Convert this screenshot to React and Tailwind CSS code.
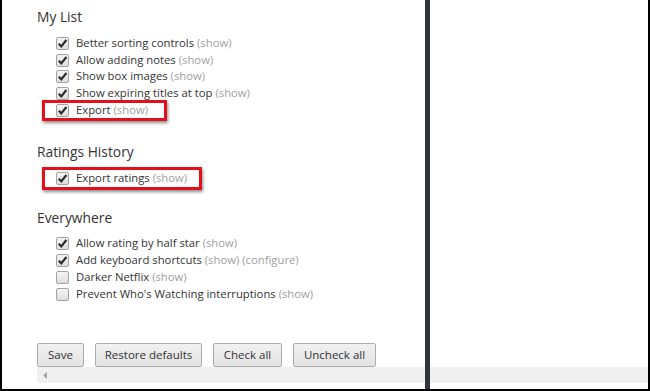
import React from "react";

const sections = [
  {
    title: "My List",
    items: [
      { label: "Better sorting controls", checked: true },
      { label: "Allow adding notes", checked: true },
      { label: "Show box images", checked: true },
      { label: "Show expiring titles at top", checked: true },
      { label: "Export", checked: true, box: "top-[-2px] h-[21px] w-[125px]" },
    ],
  },
  {
    title: "Ratings History",
    items: [
      { label: "Export ratings", checked: true, box: "top-[-3px] h-[23px] w-[160px]" },
    ],
  },
  {
    title: "Everywhere",
    items: [
      { label: "Allow rating by half star", checked: true },
      { label: "Add keyboard shortcuts", checked: true, extra: "(configure)" },
      { label: "Darker Netflix", checked: false },
      { label: "Prevent Who's Watching interruptions", checked: false },
    ],
  },
];

const sectionGap = ["", "mt-[23px]", "mt-[21px]"];

const CheckBox = ({ checked }) => (
  <span className="w-[13px] h-[13px] shrink-0 rounded-[2px] border border-[#a3a3a3] bg-gradient-to-b from-[#f4f4f4] to-[#dedede] flex items-center justify-center">
    {checked ? (
      <svg width="11" height="11" viewBox="0 0 11 11">
        <path d="M1.8 5.8 L4.3 8.4 L9.4 2" fill="none" stroke="#2b2b2b" strokeWidth="2.2" />
      </svg>
    ) : null}
  </span>
);

const buttons = [
  { label: "Save", w: "w-[47px]" },
  { label: "Restore defaults", w: "w-[107px]" },
  { label: "Check all", w: "w-[69px]" },
  { label: "Uncheck all", w: "w-[83px]" },
];

const App = () => {
  return (
    <div
      className="w-[650px] h-[391px] bg-white border-l-2 border-r-2 border-b-2 border-black flex overflow-hidden"
      style={{ fontFamily: "'Open Sans', 'Noto Sans', sans-serif" }}
    >
      <div className="w-[423px] h-full flex flex-col">
        <div className="flex-1 pl-[35px] pt-[7px]">
          {sections.map((section, i) => (
            <div key={section.title} className={sectionGap[i]}>
              <h3 className="text-[13.8px] leading-[20px] text-[#333]">{section.title}</h3>
              <ul className="mt-[8px] pl-[19px]">
                {section.items.map((item) => (
                  <li key={item.label} className="relative h-[16.75px] flex items-center text-[11.3px] text-[#333]">
                    <CheckBox checked={item.checked} />
                    <span className="ml-[7px] whitespace-nowrap">
                      {item.label} <span className="text-[#a0a0a0]">(show)</span>
                      {item.extra ? <span className="text-[#a0a0a0]"> {item.extra}</span> : null}
                    </span>
                    {item.box ? (
                      <span
                        className={
                          "absolute left-[-14px] border-[3px] border-[#e3101b] shadow-[1px_2px_3px_rgba(0,0,0,0.45)] " +
                          item.box
                        }
                      />
                    ) : null}
                  </li>
                ))}
              </ul>
            </div>
          ))}
        </div>
        <div className="pl-[35px] flex gap-[11px]">
          {buttons.map((b) => (
            <button
              key={b.label}
              className={
                "h-[24px] rounded-[2px] border border-[#acacac] bg-gradient-to-b from-[#f1f1f1] to-[#e2e2e2] text-[11.5px] text-[#333] " +
                b.w
              }
            >
              {b.label}
            </button>
          ))}
        </div>
        <div className="ml-[35px] mb-[6px] h-[16px] bg-[#f0f0f0] flex items-center pl-[6px]">
          <svg width="4" height="7" viewBox="0 0 4 7">
            <path d="M4 0 L0 3.5 L4 7 Z" fill="#a3a3a3" />
          </svg>
        </div>
      </div>
      <div className="w-[5px] h-full bg-[#2f353b]" />
      <div className="flex-1 h-full flex flex-col justify-end">
        <div className="mb-[6px] h-[16px] bg-[#f0f0f0]" />
      </div>
    </div>
  );
};

export default App;
